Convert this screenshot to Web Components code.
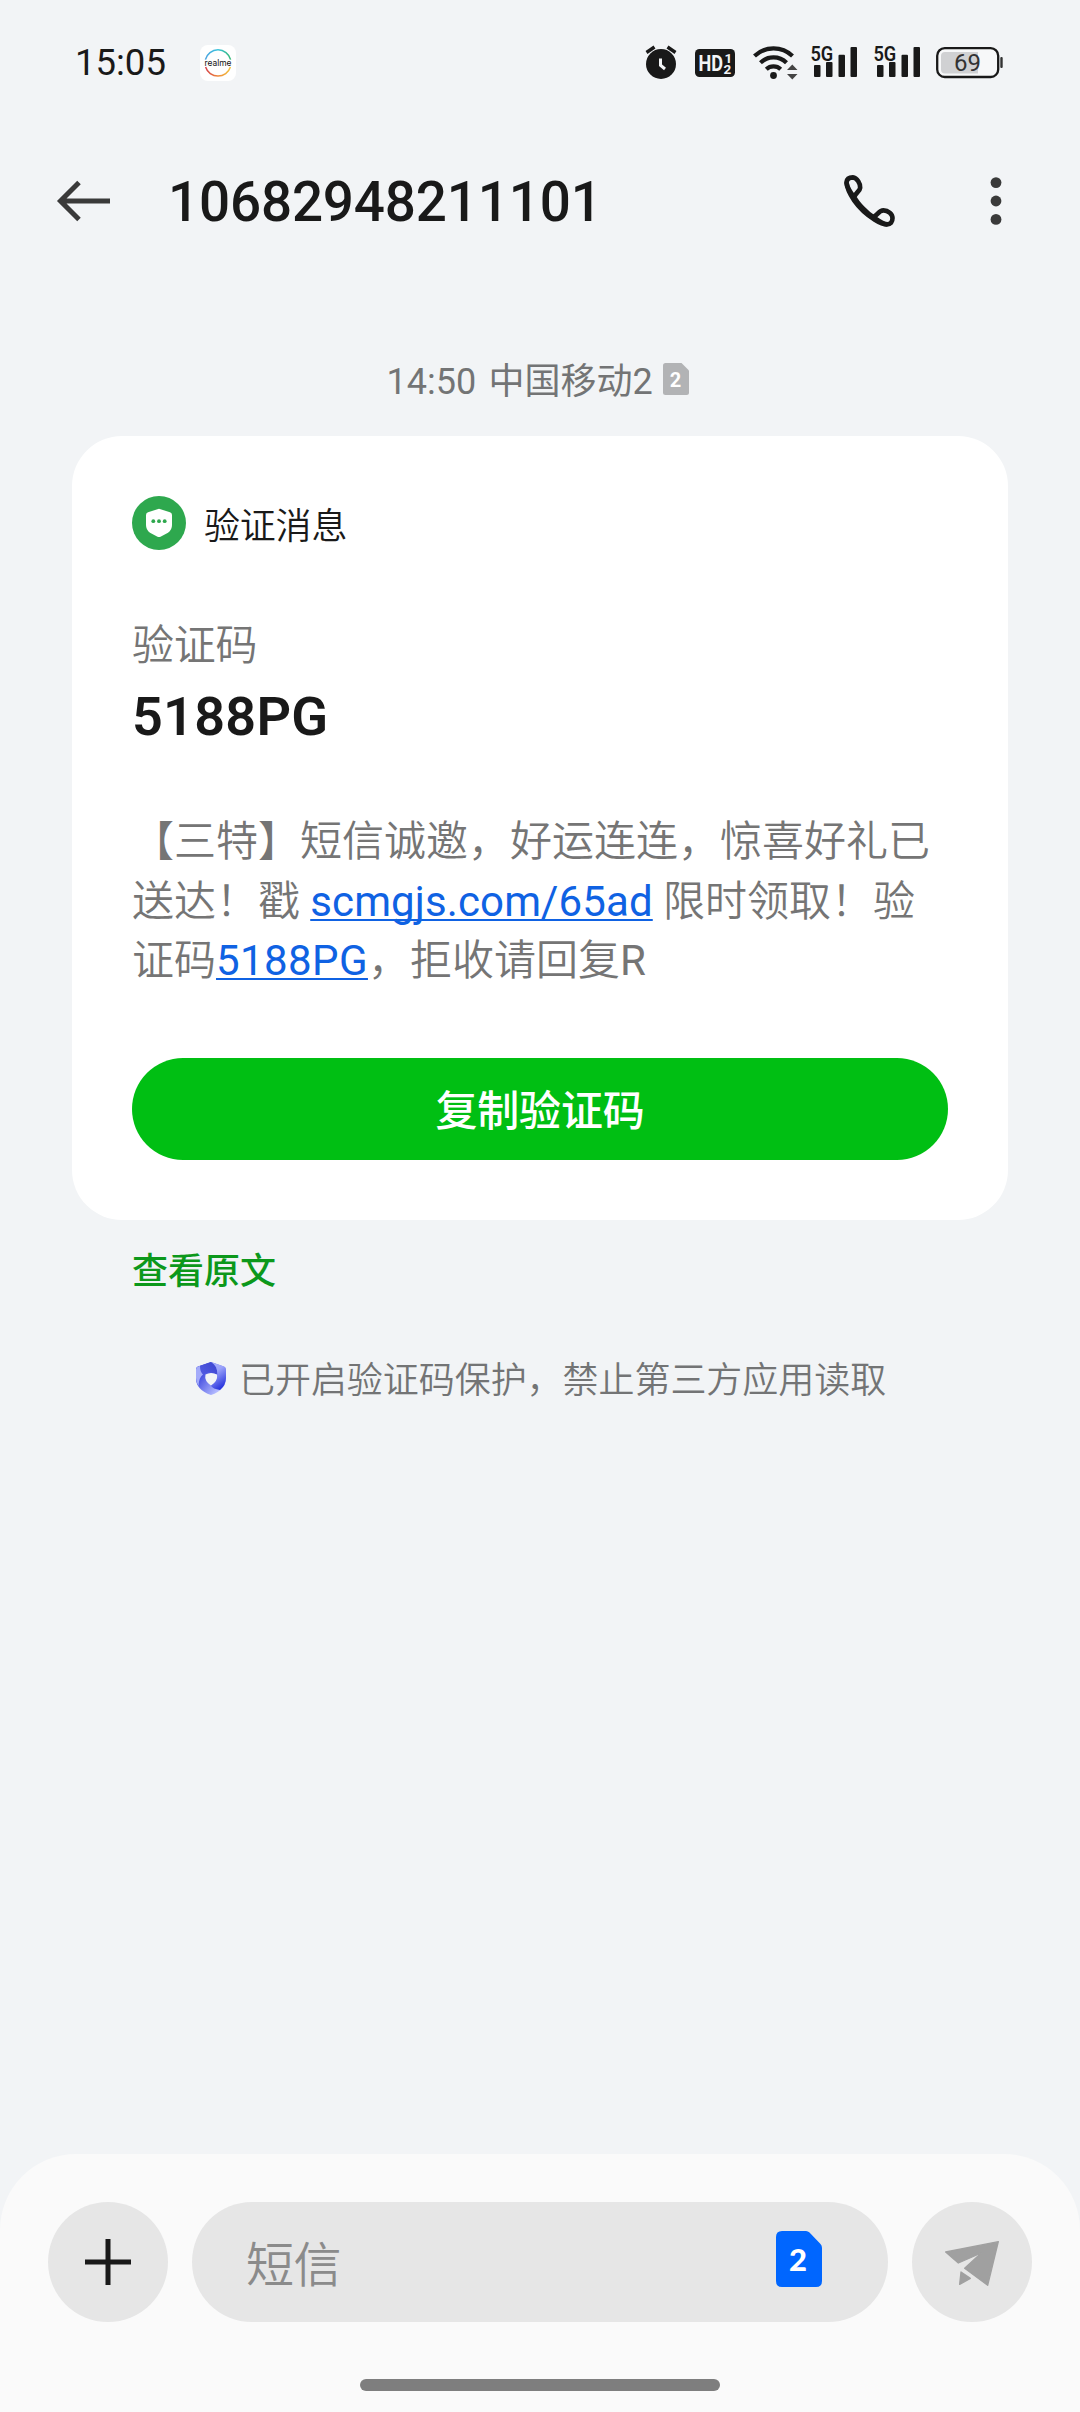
<!DOCTYPE html>
<html lang="zh-CN">
<head>
<meta charset="utf-8">
<title>10682948211101</title>
<style>
  html, body { margin: 0; padding: 0; }
  body {
    width: 1080px; height: 2412px; overflow: hidden; background: #f2f4f6;
    font-family: Roboto, "Noto Sans CJK SC", sans-serif; color: #191919;
    text-spacing-trim: space-all; text-autospace: no-autospace;
  }
</style>
</head>
<body>
<sms-screen></sms-screen>
<script>
function define(name, html) {
  const tpl = document.createElement('template');
  tpl.innerHTML = '<style>*{box-sizing:border-box}svg{display:block;flex:none}</style>' + html;
  customElements.define(name, class extends HTMLElement {
    constructor() {
      super();
      this.attachShadow({ mode: 'open' }).appendChild(tpl.content.cloneNode(true));
    }
  });
}

define('brand-badge', `
<style>:host{display:block;width:36px;height:36px}</style>
<svg width="36" height="36" viewBox="0 0 36 36">
  <defs>
    <linearGradient id="t" x1="0" x2="1"><stop offset="0" stop-color="#4aa3e0"/><stop offset=".5" stop-color="#3cc4dc"/><stop offset="1" stop-color="#35b877"/></linearGradient>
    <linearGradient id="b" x1="0" x2="1"><stop offset="0" stop-color="#d5424a"/><stop offset=".5" stop-color="#ee8a3c"/><stop offset="1" stop-color="#f2c23e"/></linearGradient>
  </defs>
  <rect width="36" height="36" rx="8" fill="#fff"/>
  <path d="M5.400 14.600A13 13 0 0 1 30.600 14.600" fill="none" stroke="url(#t)" stroke-width="1.500"/>
  <path d="M5.600 22A13 13 0 0 0 30.400 22" fill="none" stroke="url(#b)" stroke-width="1.500"/>
  <text x="4.500" y="21" textLength="27" lengthAdjust="spacingAndGlyphs" font-size="9" font-family="Inter, sans-serif" fill="#111">realme</text>
</svg>`);

define('alarm-icon', `
<style>:host{display:block}</style>
<svg width="32" height="36" viewBox="645 45 32 36">
  <circle cx="661" cy="64" r="15" fill="#191919"/>
  <path d="M646.500 52.500L654.500 47M675.500 52.500L667.500 47" stroke="#191919" stroke-width="3.400"/>
  <path d="M660.500 58.500V65.200L665 69" fill="none" stroke="#f2f4f6" stroke-width="3"/>
</svg>`);

define('hd-icon', `
<style>:host{display:block}</style>
<svg width="40" height="28" viewBox="0 0 40 28">
  <rect width="40" height="28" rx="4.500" fill="#191919"/>
  <g fill="#f2f4f6" font-family="Roboto, sans-serif" font-weight="700">
    <text x="3.500" y="22" font-size="22" textLength="24.500" lengthAdjust="spacingAndGlyphs">HD</text>
    <text x="29.500" y="13.500" font-size="13.500">1</text>
    <text x="28.500" y="25.300" font-size="13.500">2</text>
  </g>
</svg>`);

define('wifi-icon', `
<style>:host{display:block}</style>
<svg width="46" height="36" viewBox="752 43 46 36">
  <g fill="none" stroke="#191919" stroke-width="4.200">
    <path d="M754.500 55A27.500 27.500 0 0 1 792.500 55"/>
    <path d="M760.500 61.800A18.500 18.500 0 0 1 786.500 61.800"/>
    <path d="M766.300 68.300A10.500 10.500 0 0 1 780.700 68.300"/>
  </g>
  <circle cx="773.500" cy="74.500" r="3.400" fill="#191919"/>
  <path d="M787 69L792.300 63.500 797.500 69ZM787 73L792.300 78.500 797.500 73Z" fill="#444"/>
</svg>`);

define('signal-icon', `
<style>:host{display:block}</style>
<svg width="50" height="50" viewBox="808 38 50 50">
  <g fill="#191919">
    <rect x="814" y="65" width="6.500" height="12" rx="1"/>
    <rect x="826" y="62" width="6.500" height="15" rx="1"/>
    <rect x="838.500" y="54.700" width="6.500" height="22.300" rx="1"/>
    <rect x="850.500" y="47" width="6.500" height="30" rx="1"/>
    <text x="810.400" y="60.500" font-family="Roboto, sans-serif" font-size="20.500" font-weight="600" textLength="22.800" lengthAdjust="spacingAndGlyphs">5G</text>
  </g>
</svg>`);

define('battery-icon', `
<style>:host{display:block}</style>
<svg width="68" height="32" viewBox="936 47 68 32">
  <rect x="937.200" y="48.200" width="61" height="28.800" rx="7.500" fill="#f7f8f9" stroke="#191919" stroke-width="2.300"/>
  <path d="M945 52H978V73.500H945Q941 73.500 941 69.500V56Q941 52 945 52Z" fill="#d0d1d3"/>
  <rect x="1000.300" y="57" width="2.400" height="11" rx="1" fill="#333"/>
  <text x="967.500" y="71.200" text-anchor="middle" font-family="Roboto, sans-serif" font-size="24" fill="#333" textLength="27" lengthAdjust="spacingAndGlyphs">69</text>
</svg>`);

define('status-bar', `
<style>
  :host{display:flex;align-items:center;height:126px;padding:0 76px 0 75px}
  .time{font-size:36.500px;line-height:40px;width:125px}
  .icons{margin-left:auto;display:flex;align-items:center}
  hd-icon{margin-left:18px} wifi-icon{margin:-3px 0 0 17px}
  .s1{margin-left:10px} .s2{margin-left:13px} battery-icon{margin-left:15px}
</style>
<div class="time">15:05</div><brand-badge></brand-badge>
<div class="icons"><alarm-icon></alarm-icon><hd-icon></hd-icon><wifi-icon></wifi-icon>
<signal-icon class="s1"></signal-icon><signal-icon class="s2"></signal-icon><battery-icon></battery-icon></div>`);

define('chat-header', `
<style>
  :host{display:flex;align-items:center;height:150px;padding:0 78px 0 56px}
  h1{margin:2px 0 0 56px;flex:1;font-size:54.800px;font-weight:500;line-height:64px;letter-spacing:-.170px}
  .dots{margin-left:92px}
</style>
<svg width="56" height="44" viewBox="56 179 56 44"><path d="M110 201H61M79 182.500L60.500 201 79 219.500" fill="none" stroke="#3a3a3a" stroke-width="5"/></svg>
<h1><slot></slot></h1>
<svg width="56" height="56" viewBox="842.500 173 56 56"><g transform="translate(780 140) scale(.33333)" fill="none" stroke="#191919" stroke-width="14" stroke-linejoin="round">
  <path d="M224 171C213 160 201 138 201 127C202 117 210 112 220 112C233 113 243 132 242 143C241 153 231 156 224 171C234 191 263 220 281 231C295 226 297 211 312 211C326 211 339 222 339 234C339 246 333 253 323 253C312 253 294 240 281 231"/>
  <path d="M201 127C203 150 213 165 224 181C240 204 262 224 286 239C300 248 312 253 323 253"/></g></svg>
<svg class="dots" width="12" height="50" viewBox="0 0 12 50" fill="#3a3a3a"><circle cx="6" cy="6.600" r="5.400"/><circle cx="6" cy="25" r="5.400"/><circle cx="6" cy="43.400" r="5.400"/></svg>`);

define('sim-badge', `
<style>
  :host{display:block;flex:none}
  :host([size=small]) .big, :host([size=big]) .small{display:none}
</style>
<svg class="small" width="26" height="32" viewBox="0 0 26 32"><path d="M2.500 0H18.500L26 7.500V29.500Q26 32 23.500 32H2.500Q0 32 0 29.500V2.500Q0 0 2.500 0Z" fill="#b2b3b5"/><text x="12.500" y="24" text-anchor="middle" font-family="Roboto, sans-serif" font-weight="700" font-size="20" fill="#fff">2</text></svg>
<svg class="big" width="46" height="56" viewBox="0 0 46 56"><path d="M6 0H30Q32 0 33.500 1.500L44.500 13Q46 14.500 46 17V50Q46 56 40 56H6Q0 56 0 50V6Q0 0 6 0Z" fill="#0066ff"/><text x="22" y="40.300" text-anchor="middle" font-family="Lato, sans-serif" font-weight="900" font-size="31" fill="#fff">2</text></svg>`);

define('time-stamp', `
<style>:host{display:flex;gap:10px;align-items:center;margin-top:80px;padding-left:386.500px;height:50px;font-size:36px;line-height:50px;color:#737475;word-spacing:3.500px;white-space:nowrap}
.t{padding-top:1px} sim-badge{margin-top:-4px}</style>
<span class="t"><slot></slot></span><sim-badge size="small"></sim-badge>`);

define('verify-card', `
<style>
  :host{display:block;margin:30px 72px 0;height:784px;padding:60px;border-radius:50px;background:#fff}
  .head{display:flex;gap:18px;height:54px;font-size:36px;line-height:54px;align-items:flex-start;font-weight:350}
  .head span{margin-top:4px;letter-spacing:-.200px}
  .label{margin-top:66px;font-size:42px;line-height:60px;color:#757575;letter-spacing:-.200px;font-weight:350}
  .code{margin-top:9px;font-size:54px;line-height:64px;font-weight:600;letter-spacing:.250px}
  .body{margin-top:63px;height:178px;font-size:42px;line-height:59.500px;color:#757575;white-space:nowrap;font-weight:350}
  .body div{height:59.500px}
  .latin{font-weight:400}
  a{font-weight:400;color:#0f62e3;text-decoration:underline;text-decoration-thickness:2px;text-underline-offset:3px;text-decoration-skip-ink:none;letter-spacing:.120px}
  a.num{letter-spacing:.400px}
  button{display:block;margin:68px 0 0;width:816px;height:102px;border:0;border-radius:51px;background:#00bf13;color:#fff;font:500 42px/60px Roboto,"Noto Sans CJK SC",sans-serif;letter-spacing:-.200px;padding:6px 0 0}
</style>
<div class="head"><svg width="54" height="54" viewBox="0 0 54 54"><circle cx="27" cy="27" r="27" fill="#2ea84e"/><path d="M27 12.800L38 16.300Q40 17 40 19V29Q40 34 36 36.800L28.500 40.700Q27 41.500 25.500 40.700L18 36.800Q14 34 14 29V19Q14 17 16 16.300Z" fill="#fff"/><g fill="#2ea84e"><circle cx="21.300" cy="25.200" r="1.900"/><circle cx="27" cy="25.200" r="1.900"/><circle cx="32.700" cy="25.200" r="1.900"/></g></svg><span>验证消息</span></div>
<div class="label">验证码</div>
<div class="code">5188PG</div>
<div class="body"><div>【三特】短信诚邀，好运连连，惊喜好礼已</div><div>送达！戳 <a>scmgjs.com/65ad</a> 限时领取！验</div><div>证码<a class="num">5188PG</a>，拒收请回复<span class="latin">R</span></div></div>
<button>复制验证码</button>`);

define('source-link', `
<style>:host{display:block;margin:27px 0 0 132px;height:49px;font-size:36px;line-height:50px;font-weight:500;color:#0c981b}</style><slot></slot>`);

define('protect-note', `
<style>:host{display:flex;align-items:center;gap:13px;margin-top:60px;padding-left:196px;height:50px;font-size:36px;line-height:50px;color:#737475;font-weight:350;white-space:nowrap}
svg{margin-top:-5px} span{letter-spacing:-.050px}</style>
<svg width="30" height="33" viewBox="0 0 30 33">
  <defs>
    <linearGradient id="a" x1="1" y1="0" x2="0" y2="1"><stop offset="0" stop-color="#3b43cf"/><stop offset="1" stop-color="#5f69ec"/></linearGradient>
    <linearGradient id="b" x1=".2" y1="0" x2=".6" y2="1"><stop offset="0" stop-color="#a9b0fa"/><stop offset=".35" stop-color="#9aa2fa"/><stop offset="1" stop-color="#2430dc"/></linearGradient>
    <linearGradient id="c" x1="0" y1=".5" x2=".6" y2="1"><stop offset="0" stop-color="#3a44dd"/><stop offset="1" stop-color="#b3baff"/></linearGradient>
  </defs>
  <path d="M15 0L28 4.500Q30 5.300 30 7.500V16Q30 28 15 33Q0 28 0 16V7.500Q0 5.300 2 4.500Z" fill="url(#c)"/>
  <path d="M15 0L2 4.500Q0 5.300 0 7.500V16Q0 20 2.500 24Q3 14 9.500 11Q14 9.500 21.500 13Q22 5 15 0Z" fill="url(#a)"/>
  <path d="M0 7.500V16Q0 20 2.500 24Q3 15 7 12.500Q4 10 4 4L2 4.500Q0 5.300 0 7.500Z" fill="#a4abfa"/>
  <path d="M15 0L28 4.500Q30 5.300 30 7.500V16Q30 23 24 28Q17 27 14.500 23.500Q22 18 21.500 12Q21 3 15 0Z" fill="url(#b)"/>
  <path d="M9.500 12.500Q15 9.500 21 12.500Q22 19 15 23.500Q8 19 9.500 12.500Z" fill="#f2f4f6"/>
</svg><span><slot></slot></span>`);

define('compose-bar', `
<style>
  :host{display:flex;flex-direction:column;align-items:center;height:258px;background:#fafafa;border-radius:76px 76px 0 0;padding-top:48px}
  .row{display:flex;gap:24px;width:984px;height:120px}
  .round,.field{background:#e6e6e6;border-radius:60px;height:120px;display:flex;align-items:center}
  .round{width:120px;justify-content:center}
  .field{flex:1;padding:0 66px 0 54px;justify-content:space-between;font-size:48px;color:#8b8b8b;font-weight:350}
  .field span{line-height:70px;padding-top:8px;letter-spacing:-.500px} sim-badge{margin-top:-6px}
  .home{margin-top:57px;width:360px;height:12px;border-radius:6px;background:#7e7e7e}
</style>
<div class="row">
  <div class="round"><svg width="46" height="46" viewBox="0 0 46 46"><path d="M23 0V46M0 23H46" stroke="#191919" stroke-width="5"/></svg></div>
  <div class="field"><span>短信</span><sim-badge size="big"></sim-badge></div>
  <div class="round"><svg width="120" height="120" viewBox="912 2202 120 120"><g transform="translate(740 2180) scale(.33333)" fill="#a0a0a0" stroke="#a0a0a0" stroke-width="4" stroke-linejoin="round"><path d="M775 185L617 216 655 249 724 219 674 265 743 316Z"/><path d="M663 276L691 295 659 313Z"/></g></svg></div>
</div>
<div class="home"></div>`);

define('sms-screen', `
<style>:host{display:flex;flex-direction:column;height:2412px} compose-bar{margin-top:auto}</style>
<status-bar></status-bar>
<chat-header>10682948211101</chat-header>
<time-stamp>14:50 中国移动2</time-stamp>
<verify-card></verify-card>
<source-link>查看原文</source-link>
<protect-note>已开启验证码保护，禁止第三方应用读取</protect-note>
<compose-bar></compose-bar>`);
</script>
</body>
</html>
